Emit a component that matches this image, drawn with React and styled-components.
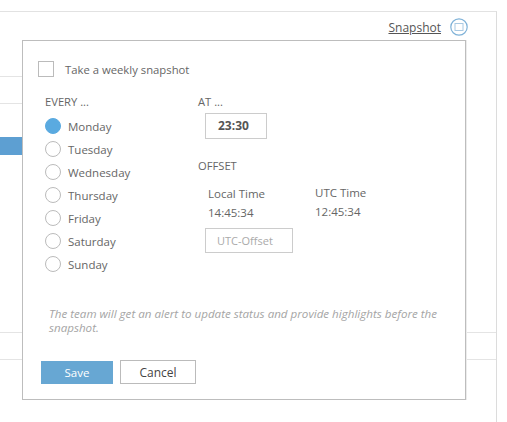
import React, { useState } from "react";
import styled, { createGlobalStyle } from "styled-components";

const days = ["Monday", "Tuesday", "Wednesday", "Thursday", "Friday", "Saturday", "Sunday"];

export default function App() {
  const [day, setDay] = useState("Monday");
  const [weekly, setWeekly] = useState(false);

  return (
    <>
      <GlobalStyle />
      <Page>
        <BackPanel>
          <PanelHeader>
            <SnapshotLink href="#">Snapshot</SnapshotLink>
            <SnapshotIcon viewBox="0 0 18 18">
              <circle cx="9" cy="9" r="8.2" fill="none" stroke="#7fb2d8" strokeWidth="1.2" />
              <rect x="5" y="5.5" width="8" height="7" fill="none" stroke="#a9c9e2" strokeWidth="1" />
            </SnapshotIcon>
          </PanelHeader>
          <BackRow $top={40} />
          <BackRow $top={27} />
          <BlueTab />
          <BackRow $top={178} $full />
          <BackRow $top={27} $full />
        </BackPanel>

        <Dialog>
          <CheckRow onClick={() => setWeekly(!weekly)}>
            <CheckBox>{weekly ? "✓" : ""}</CheckBox>
            <CheckLabel>Take a weekly snapshot</CheckLabel>
          </CheckRow>

          <Columns>
            <DayColumn>
              <Caption>EVERY ...</Caption>
              <DayList>
                {days.map((d) => (
                  <DayOption key={d} onClick={() => setDay(d)}>
                    <Radio $checked={d === day} />
                    <DayLabel>{d}</DayLabel>
                  </DayOption>
                ))}
              </DayList>
            </DayColumn>

            <TimeColumn>
              <Caption>AT ...</Caption>
              <TimeBox>23:30</TimeBox>
              <OffsetCaption>OFFSET</OffsetCaption>
              <TimeGrid>
                <TimeCell>
                  <TimeLabel>Local Time</TimeLabel>
                  <TimeValue>14:45:34</TimeValue>
                </TimeCell>
                <TimeCell $shift>
                  <TimeLabel>UTC Time</TimeLabel>
                  <TimeValue>12:45:34</TimeValue>
                </TimeCell>
              </TimeGrid>
              <OffsetInput placeholder="UTC-Offset" />
            </TimeColumn>
          </Columns>

          <Note>
            The team will get an alert to update status and provide highlights before the snapshot.
          </Note>

          <Actions>
            <SaveButton>Save</SaveButton>
            <CancelButton>Cancel</CancelButton>
          </Actions>
        </Dialog>
      </Page>
    </>
  );
}

/* ------------------------------------------
   Styled Components
------------------------------------------- */

const GlobalStyle = createGlobalStyle`
  body {
    margin: 0;
    background: #fff;
    font-family: "Open Sans", "Noto Sans", sans-serif;
    color: #666;
  }
`;

const Page = styled.div`
  position: relative;
  width: 507px;
  height: 422px;
  overflow: hidden;
`;

const BackPanel = styled.div`
  margin-top: 11px;
  width: 496px;
  height: 411px;
  border-top: 1px solid #e2e2e2;
  border-right: 1px solid #dcdcdc;
  display: flex;
  flex-direction: column;
`;

const PanelHeader = styled.div`
  display: flex;
  justify-content: flex-end;
  align-items: center;
  gap: 9px;
  padding: 5px 28px 0 0;
  height: 20px;
`;

const SnapshotLink = styled.a`
  font-size: 12px;
  color: #555;
  text-decoration: underline;
`;

const SnapshotIcon = styled.svg`
  width: 18px;
  height: 18px;
`;

const BackRow = styled.div`
  margin-top: ${(p) => p.$top - 1}px;
  width: ${(p) => (p.$full ? "100%" : "22px")};
  border-top: 1px solid #e4e4e4;
`;

const BlueTab = styled.div`
  margin-top: 33px;
  width: 22px;
  height: 18px;
  background: #5d9fd2;
`;

const Dialog = styled.div`
  position: absolute;
  left: 22px;
  top: 40px;
  width: 444px;
  height: 360px;
  box-sizing: border-box;
  background: #fff;
  border: 1px solid #bdbdbd;
  box-shadow: 1px 0 0 #ececec;
  padding: 20px 0 0 15px;
  display: flex;
  flex-direction: column;
`;

const CheckRow = styled.label`
  display: flex;
  align-items: center;
  gap: 11px;
  cursor: pointer;
`;

const CheckBox = styled.span`
  width: 14px;
  height: 14px;
  border: 1px solid #bbb;
  font-size: 11px;
  line-height: 14px;
  text-align: center;
`;

const CheckLabel = styled.span`
  font-size: 11.3px;
  color: #666;
`;

const Columns = styled.div`
  display: flex;
  margin-top: 17px;
`;

const DayColumn = styled.div`
  display: flex;
  flex-direction: column;
  width: 153px;
  padding-left: 7px;
`;

const Caption = styled.div`
  font-size: 11.2px;
  color: #666;
  line-height: 16px;
`;

const DayList = styled.div`
  display: flex;
  flex-direction: column;
  gap: 7px;
  margin-top: 8px;
`;

const DayOption = styled.label`
  display: flex;
  align-items: center;
  gap: 7px;
  height: 16px;
  cursor: pointer;
`;

const Radio = styled.span`
  width: 14px;
  height: 14px;
  border-radius: 50%;
  border: 1px solid ${(p) => (p.$checked ? "#5aaae0" : "#bbb")};
  background: ${(p) => (p.$checked ? "#5aaae0" : "#fff")};
`;

const DayLabel = styled.span`
  font-size: 11.5px;
  color: #666;
`;

const TimeColumn = styled.div`
  display: flex;
  flex-direction: column;
  align-items: flex-start;
`;

const TimeBox = styled.div`
  margin: 3px 0 0 7px;
  width: 62px;
  height: 26px;
  box-sizing: border-box;
  border: 1px solid #ccc;
  padding-left: 12px;
  font-size: 12px;
  font-weight: 700;
  color: #555;
  line-height: 24px;
`;

const OffsetCaption = styled(Caption)`
  margin-top: 19px;
`;

const TimeGrid = styled.div`
  display: flex;
  margin: 12px 0 0 10px;
`;

const TimeCell = styled.div`
  display: flex;
  flex-direction: column;
  gap: 4px;
  width: 107px;
  margin-top: ${(p) => (p.$shift ? "-1px" : "0")};
`;

const TimeLabel = styled.span`
  font-size: 11.5px;
  color: #666;
`;

const TimeValue = styled.span`
  font-size: 11.5px;
  color: #666;
`;

const OffsetInput = styled.input`
  margin: 8px 0 0 7px;
  width: 88px;
  height: 25px;
  box-sizing: border-box;
  border: 1px solid #ccc;
  padding: 0 0 0 11px;
  font-family: inherit;
  font-size: 11px;
  color: #666;
  outline: none;

  &::placeholder {
    color: #aaa;
  }
`;

const Note = styled.p`
  margin: 35px 20px 0 11px;
  font-size: 11.6px;
  font-style: italic;
  color: #a5a5a5;
  line-height: 14px;
`;

const Actions = styled.div`
  display: flex;
  gap: 7px;
  margin: 26px 0 0 3px;
`;

const SaveButton = styled.button`
  width: 72px;
  height: 23px;
  border: none;
  background: #67a7d3;
  color: #fff;
  font-family: inherit;
  font-size: 11.5px;
  cursor: pointer;
`;

const CancelButton = styled.button`
  width: 76px;
  height: 24px;
  margin-top: -1px;
  border: 1px solid #bbb;
  background: #fff;
  color: #444;
  font-family: inherit;
  font-size: 12px;
  cursor: pointer;
`;
